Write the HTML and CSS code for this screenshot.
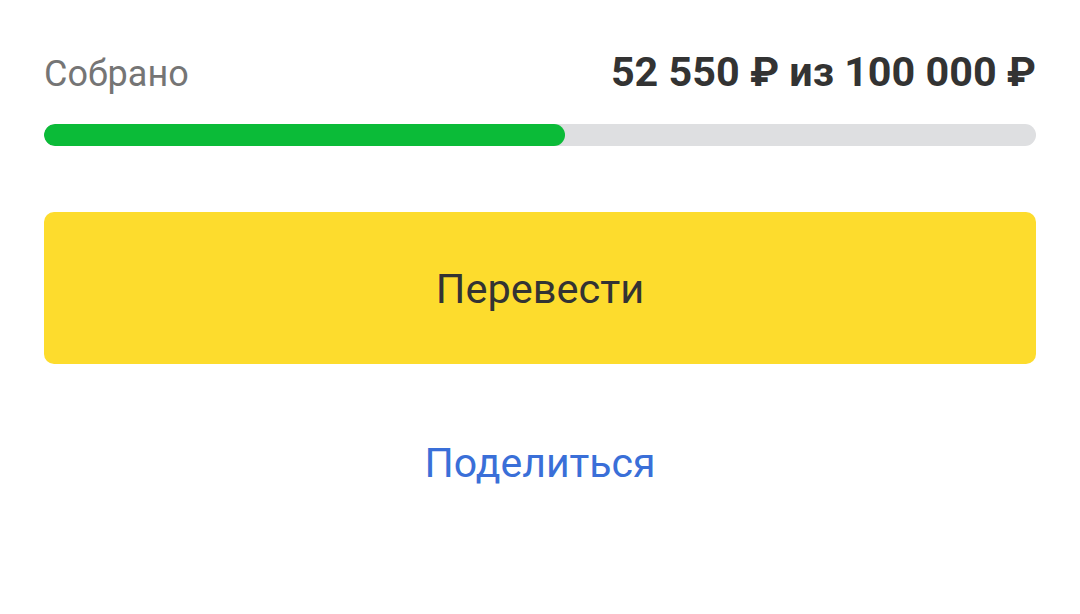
FILE: index.html
```html
<!DOCTYPE html>
<html lang="ru">
<head>
<meta charset="utf-8">
<link rel="stylesheet" href="styles.css">
</head>
<body>
<div class="card">
  <div class="row">
    <span class="label">Собрано</span>
    <span class="amount">52 550 ₽ из 100 000 ₽</span>
  </div>
  <div class="track"><div class="fill" style="width:52.55%"></div></div>
  <button class="pay">Перевести</button>
  <div class="share">Поделиться</div>
</div>
</body>
</html>
```

FILE: styles.css
```css
html, body { margin: 0; padding: 0; background: #fff; }
body { font-family: Roboto, "Noto Sans", sans-serif; width: 1080px; height: 614px; overflow: hidden; }
.card { padding: 48px 44px 0 44px; display: flex; flex-direction: column; }
.row { display: flex; justify-content: space-between; align-items: baseline; height: 52px; }
.label { font-size: 36px; color: #757575; }
.amount { font-size: 41.3px; font-weight: 700; color: #333; }
.track { margin-top: 24px; height: 22px; border-radius: 11px; background: #dedfe1; overflow: hidden; }
.fill { height: 100%; background: #0bbb38; border-radius: 11px; }
.pay { margin-top: 66px; height: 152px; border: none; border-radius: 10px; background: #fddc2d; font-family: inherit; font-size: 41.5px; color: #333; padding: 0; }
.share { margin-top: 75px; text-align: center; font-size: 41px; color: #3a6fd8; }
```
